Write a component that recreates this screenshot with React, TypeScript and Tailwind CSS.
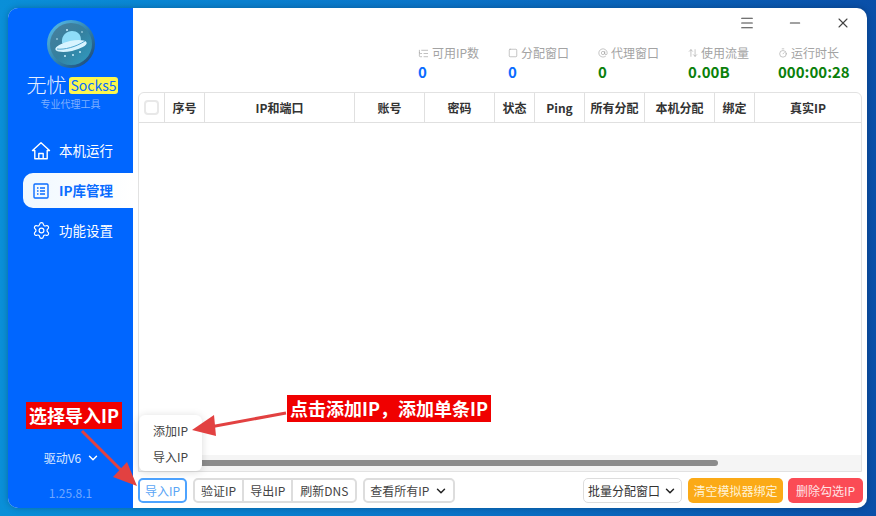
import { ChevronDown, Settings, X, Menu, Minus, ArrowUpDown, Timer, AtSign, ListTree, Square } from 'lucide-react';

const stats = [
  { label: '可用IP数', value: '0', color: 'text-[#0a6cff]', icon: <ListTree size={11} strokeWidth={1.5} /> },
  { label: '分配窗口', value: '0', color: 'text-[#0a6cff]', icon: <Square size={10} strokeWidth={1.5} /> },
  { label: '代理窗口', value: '0', color: 'text-[#0a800a]', icon: <AtSign size={10} strokeWidth={1.5} /> },
  { label: '使用流量', value: '0.00B', color: 'text-[#0a800a]', icon: <ArrowUpDown size={10} strokeWidth={1.5} /> },
  { label: '运行时长', value: '000:00:28', color: 'text-[#0a800a]', icon: <Timer size={10} strokeWidth={1.5} /> },
];

const columns = [
  { label: '序号', width: 'w-[40px]' },
  { label: 'IP和端口', width: 'w-[150px]' },
  { label: '账号', width: 'w-[70px]' },
  { label: '密码', width: 'w-[70px]' },
  { label: '状态', width: 'w-[40px]' },
  { label: 'Ping', width: 'w-[50px]' },
  { label: '所有分配', width: 'w-[60px]' },
  { label: '本机分配', width: 'w-[70px]' },
  { label: '绑定', width: 'w-[40px]' },
];

function Logo() {
  return (
    <svg width="48" height="48" viewBox="0 0 48 48">
      <defs>
        <linearGradient id="disc" x1="0" y1="0" x2="1" y2="1">
          <stop offset="0" stopColor="#5fc4ee" />
          <stop offset="0.55" stopColor="#2f7fa8" />
          <stop offset="1" stopColor="#1d3f6e" />
        </linearGradient>
        <linearGradient id="inner" x1="0" y1="0" x2="1" y2="1">
          <stop offset="0" stopColor="#4a7f9c" />
          <stop offset="0.5" stopColor="#34809f" />
          <stop offset="1" stopColor="#2f9dc4" />
        </linearGradient>
      </defs>
      <circle cx="24" cy="24" r="24" fill="url(#disc)" />
      <circle cx="24" cy="24" r="21" fill="url(#inner)" />
      <path d="M15 23c-1-8 5-12 10-12s9 3 9 9c-3 4-15 6-19 3z" fill="#8fdcf8" />
      <ellipse cx="24" cy="26" rx="16" ry="5" transform="rotate(-12 24 26)" fill="#d8f4ff" />
      <path d="M10 29c7 1 19-2 28-8" stroke="#4fa6cf" strokeWidth="1" fill="none" />
      <g fill="#c8eefc">
        <circle cx="20" cy="10" r="1" />
        <circle cx="35" cy="12" r="0.8" />
        <circle cx="10" cy="19" r="0.8" />
        <circle cx="18" cy="36" r="1" />
        <circle cx="26" cy="35" r="1" />
        <circle cx="33" cy="32" r="1" />
      </g>
    </svg>
  );
}

function HomeIcon() {
  return (
    <svg width="20" height="20" viewBox="0 0 20 20" fill="none" stroke="currentColor" strokeWidth="1.4" strokeLinejoin="round">
      <path d="M1.5 9.5 10 1.8l8.500 7.700h-2.300v8.300H3.800V9.500z" />
      <path d="M7.800 17.800v-5.300h4.400v5.300" />
    </svg>
  );
}

function ListBoxIcon() {
  return (
    <svg width="16" height="16" viewBox="0 0 16 16" fill="none" stroke="currentColor" strokeWidth="1.4">
      <rect x="1" y="1" width="14" height="14" rx="1" />
      <path d="M4 5h1.500M4 8h1.500M4 11h1.500M7 5h5M7 8h5M7 11h5" />
    </svg>
  );
}

function NavItem({ icon, label, active }: { icon: React.ReactNode; label: string; active?: boolean }) {
  return (
    <div
      className={`flex h-[35px] items-center gap-[8px] pl-[8px] text-[13.5px] ${
        active ? 'rounded-l-[10px] bg-gradient-to-r from-[#f0f8ff] to-white font-bold text-[#0a6cff]' : 'text-white'
      }`}
    >
      <span className="flex w-[20px] justify-center">{icon}</span>
      {label}
    </div>
  );
}

function ToolButton({ label, last }: { label: string; last?: boolean }) {
  return (
    <div className={`flex h-full items-center px-[6px] text-[12px] text-[#444] ${last ? 'px-[7px]' : 'border-r-2 border-[#ddd]'}`}>{label}</div>
  );
}

export default function App() {
  return (
    <div
      className="relative h-[516px] w-[876px] overflow-hidden bg-gradient-to-r from-[#0a8fd8] via-[#0b74c8] to-[#0a4fa8] pb-[8px] pl-[8px] pr-[9px] pt-[8px]"
      style={{ fontFamily: '"Noto Sans CJK SC", "Noto Sans", sans-serif' }}
    >
      <div className="flex h-[500px] overflow-hidden rounded-[10px] bg-white shadow-[0_0_6px_rgba(0,0,0,0.25)]">
        <aside className="flex w-[125px] shrink-0 flex-col bg-[#0066ff]">
          <div className="flex flex-col items-center pt-[12px]">
            <Logo />
            <div className="mt-[4px] flex items-center gap-[3px] pl-[3px]">
              <span className="text-[20px] font-light leading-[26px] text-[#e6f0ff]">无忧</span>
              <span className="rounded-[3px] bg-[#fbf74e] px-[1px] text-[14px] leading-[17px] text-[#0a6cff]">Socks5</span>
            </div>
            <div className="text-[10px] leading-[12px] text-[#7fb0ff]">专业代理工具</div>
          </div>
          <nav className="mt-[23px] flex flex-col gap-[5px] pl-[15px]">
            <NavItem icon={<HomeIcon />} label="本机运行" />
            <NavItem icon={<ListBoxIcon />} label="IP库管理" active />
            <NavItem icon={<Settings size={19} strokeWidth={1.5} />} label="功能设置" />
          </nav>
          <div className="mt-auto flex flex-col items-center">
            <div className="flex items-center gap-[5px] pl-[3px] text-[12px] leading-[18px] text-[#dce9ff]">
              驱动V6
              <ChevronDown size={14} strokeWidth={2.5} className="text-white" />
            </div>
            <div className="mb-[6px] mt-[17px] text-[12px] leading-[18px] text-[#6fa6ff]">1.25.8.1</div>
          </div>
        </aside>

        <main className="flex min-w-0 flex-1 flex-col px-[5px]">
          <div className="flex h-[28px] shrink-0 items-center justify-end gap-[32px] pr-[11px] pt-[2px] text-[#444]">
            <Menu size={16} strokeWidth={1.6} />
            <Minus size={16} strokeWidth={1.6} />
            <X size={16} strokeWidth={1.6} />
          </div>
          <div className="ml-[280px] flex pt-[9px]">
            {stats.map(s => (
              <div key={s.label} className="w-[90px] shrink-0 whitespace-nowrap">
                <div className="flex items-center gap-[3px] text-[12px] leading-[16px] text-[#a3a3a3]">
                  {s.icon}
                  {s.label}
                </div>
                <div className={`mt-[1px] text-[15px] font-bold leading-[20px] ${s.color}`}>{s.value}</div>
              </div>
            ))}
          </div>

          <div className="mt-[10px] flex h-[380px] flex-col overflow-hidden rounded-t-[6px] border border-[#e2e2e2]">
            <div className="flex h-[30px] shrink-0 border-b border-[#e0e0e0] text-[12px] font-bold text-[#333]">
              <div className="flex w-[26px] items-center justify-center border-r border-[#e0e0e0]">
                <div className="h-[15px] w-[15px] rounded-[4px] border-2 border-[#e8e8e8]" />
              </div>
              {columns.map(c => (
                <div key={c.label} className={`flex items-center justify-center border-r border-[#e0e0e0] ${c.width}`}>
                  {c.label}
                </div>
              ))}
              <div className="flex flex-1 items-center justify-center">真实IP</div>
            </div>
            <div className="flex-1" />
            <div className="flex h-[16px] items-center bg-[#f5f5f5]">
              <div className="h-[6px] w-[579px] rounded-full bg-[#8c8c8c]" />
            </div>
          </div>

          <div className="-mr-[1px] mt-[6px] flex h-[25px] items-stretch text-[12px]">
            <div className="flex w-[49px] items-center justify-center rounded-[5px] border-2 border-[#4da3ff] text-[#5aa5f5]">导入IP</div>
            <div className="ml-[6px] flex items-center rounded-[5px] border-2 border-[#ddd]">
              <ToolButton label="验证IP" />
              <ToolButton label="导出IP" />
              <ToolButton label="刷新DNS" last />
            </div>
            <div className="ml-[6px] flex w-[92px] items-center justify-center gap-[5px] rounded-[5px] border-2 border-[#ddd] text-[#444]">
              查看所有IP
              <ChevronDown size={14} strokeWidth={2.5} className="text-[#222]" />
            </div>
            <div className="ml-auto flex w-[99px] items-center justify-center gap-[3px] rounded-[5px] border border-[#ddd] text-[#333]">
              批量分配窗口
              <ChevronDown size={14} strokeWidth={2.5} className="text-[#222]" />
            </div>
            <div className="ml-[6px] flex w-[95px] items-center justify-center rounded-[5px] bg-[#fbaa17] text-[#fff3d6]">清空模拟器绑定</div>
            <div className="ml-[5px] flex w-[75px] items-center justify-center rounded-[5px] bg-[#fb4b55] text-[#ffe3e5]">删除勾选IP</div>
          </div>
        </main>
      </div>

      {/* popup */}
      <div className="absolute left-[139px] top-[415px] flex h-[56px] w-[63px] flex-col rounded-[6px] bg-white text-[12px] text-[#444] shadow-[0_1px_8px_rgba(0,0,0,0.15)]">
        <div className="flex h-[30px] items-center justify-center pt-[1px]">添加IP</div>
        <div className="flex h-[26px] items-center justify-center pb-[3px]">导入IP</div>
      </div>

      {/* annotations */}
      <div className="absolute left-[26px] top-[402px] flex h-[27px] w-[96px] items-center justify-center whitespace-nowrap bg-[#f00000] text-[18px] font-bold text-white">
        选择导入IP
      </div>
      <div className="absolute left-[287px] top-[395px] flex h-[27px] w-[204px] items-center justify-center whitespace-nowrap bg-[#f00000] text-[18px] font-bold text-white">
        点击添加IP，添加单条IP
      </div>
      <svg className="absolute left-0 top-0" width="876" height="516" viewBox="0 0 876 516">
        <line x1="82" y1="431" x2="124" y2="473" stroke="#e24141" strokeWidth="3" />
        <polygon points="137,486 113,477 127,462" fill="#e24141" />
        <line x1="286" y1="413" x2="210" y2="427" stroke="#e24141" strokeWidth="3" />
        <polygon points="192,430 214,415 216,436" fill="#e24141" />
      </svg>
    </div>
  );
}
